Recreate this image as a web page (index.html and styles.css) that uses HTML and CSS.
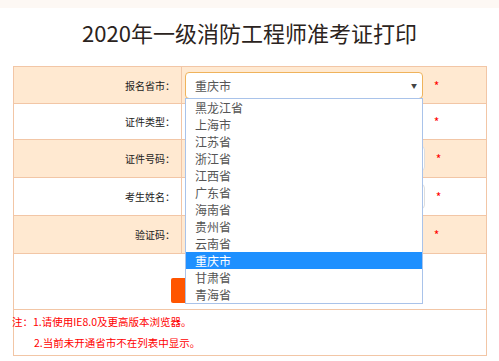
FILE: index.html
```html
<!DOCTYPE html>
<html lang="zh-CN">
<head>
    <meta charset="UTF-8">
    <meta name="viewport" content="width=device-width, initial-scale=1.0">
    <title>2020年一级消防工程师准考证打印</title>
    <link rel="stylesheet" href="styles.css">
</head>
<body>
    <div class="top-bar"></div>
    <h1 class="page-title">2020年一级消防工程师准考证打印</h1>

    <form class="print-form">
        <table class="form-table">
            <tr class="row-peach row-first">
                <td class="label">报名省市：</td>
                <td class="field">
                    <div class="select-wrap">
                        <div class="select-box">
                            <span>重庆市</span>
                            <span class="arrow">▼</span>
                        </div>
                        <ul class="select-list">
                            <li>黑龙江省</li>
                            <li>上海市</li>
                            <li>江苏省</li>
                            <li>浙江省</li>
                            <li>江西省</li>
                            <li>广东省</li>
                            <li>海南省</li>
                            <li>贵州省</li>
                            <li>云南省</li>
                            <li class="selected">重庆市</li>
                            <li>甘肃省</li>
                            <li>青海省</li>
                        </ul>
                    </div>
                    <span class="star">*</span>
                </td>
            </tr>
            <tr class="row-short">
                <td class="label">证件类型：</td>
                <td class="field">
                    <div class="input-box"></div>
                    <span class="star">*</span>
                </td>
            </tr>
            <tr class="row-peach">
                <td class="label">证件号码：</td>
                <td class="field">
                    <div class="input-box wide"></div>
                    <span class="star">*</span>
                </td>
            </tr>
            <tr>
                <td class="label">考生姓名：</td>
                <td class="field">
                    <div class="input-box wide"></div>
                    <span class="star">*</span>
                </td>
            </tr>
            <tr class="row-peach">
                <td class="label">验证码：</td>
                <td class="field">
                    <div class="input-box"></div>
                    <span class="star">*</span>
                </td>
            </tr>
            <tr class="row-button">
                <td colspan="2">
                    <button type="button" class="btn-print" aria-label="打印准考证"></button>
                </td>
            </tr>
            <tr class="row-notes">
                <td colspan="2">
                    <p class="note">注：1.请使用IE8.0及更高版本浏览器。</p>
                    <p class="note indent">2.当前未开通省市不在列表中显示。</p>
                </td>
            </tr>
        </table>
    </form>
</body>
</html>
```

FILE: styles.css
```css
body {
    margin: 0;
    font-family: "Noto Sans CJK SC", "Liberation Sans", sans-serif;
    background: #fff;
    color: #333;
}

.top-bar {
    height: 8px;
    background: #fdf8f4;
}

.page-title {
    margin: 0;
    height: 58px;
    line-height: 48px;
    text-align: center;
    font-size: 22px;
    font-weight: normal;
    color: #2b2320;
}

.print-form {
    margin-left: 13px;
}

.form-table {
    width: 474px;
    border-collapse: collapse;
    font-size: 12px;
}

.form-table td {
    border: 1px solid #f2c6a6;
    padding: 0;
}

.form-table tr {
    height: 38px;
}

.form-table tr.row-first {
    height: 37px;
}

.form-table tr.row-short {
    height: 36px;
}

.row-peach td {
    background: #ffe9d1;
}

.label {
    width: 161px;
    text-align: right;
    padding-right: 6px !important;
    font-size: 10px;
    color: #222;
}

.field {
    padding-left: 3px !important;
}

.field .star {
    color: #f00;
    font-size: 12px;
    margin-left: 8px;
    vertical-align: middle;
}

.select-wrap {
    position: relative;
    display: inline-block;
    vertical-align: middle;
}

.select-box {
    box-sizing: border-box;
    width: 238px;
    height: 27px;
    border: 1px solid #efb35c;
    border-radius: 4px;
    background: #fff;
    display: flex;
    align-items: center;
    justify-content: space-between;
    padding: 0 5px 0 9px;
    font-size: 12px;
    color: #555;
}

.arrow {
    font-size: 6px;
    color: #444;
}

.select-list {
    position: absolute;
    top: 26px;
    left: 0;
    z-index: 10;
    box-sizing: border-box;
    width: 238px;
    margin: 0;
    padding: 0;
    list-style: none;
    background: #fff;
    border: 1px solid #a9c3ea;
}

.select-list li {
    height: 17px;
    line-height: 17px;
    padding-left: 9px;
    font-size: 12px;
    color: #555;
}

.select-list li.selected {
    background: #1e90ff;
    color: #fff;
}

.input-box {
    display: inline-block;
    vertical-align: middle;
    width: 238px;
    height: 25px;
    border: 1px solid #ddd;
    border-radius: 4px;
    background: #fff;
    box-sizing: border-box;
}

.input-box.wide {
    width: 240px;
}

.form-table tr.row-button {
    height: 56px;
}

.row-button td {
    text-align: center;
    vertical-align: top;
}

.btn-print {
    margin-top: 24px;
    width: 158px;
    height: 25px;
    border: none;
    border-radius: 2px;
    background: #ff5500;
}

.form-table tr.row-notes {
    height: 46px;
}

.row-notes td {
    vertical-align: top;
    padding-top: 1px;
}

.note {
    margin: 0;
    line-height: 21px;
    color: #f00;
    font-size: 10.5px;
    margin-left: -2px;
}

.note.indent {
    padding-left: 22px;
}
```
